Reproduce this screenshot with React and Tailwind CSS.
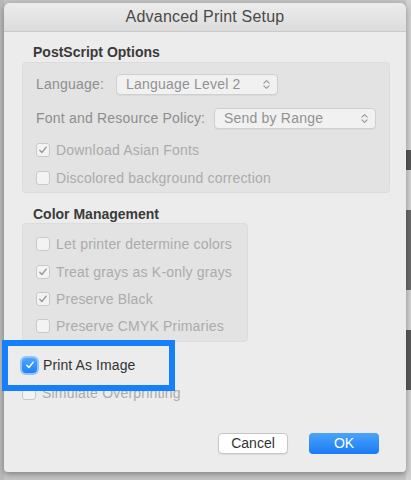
import React from 'react';

const font = { fontFamily: '"Liberation Sans", Arial, sans-serif' };

const Check = ({ checked, color = '#9a9a9a', size = 'w-[10px] h-[10px]' }) => (
  <svg viewBox="0 0 14 14" className={size}>
    {checked && (
      <path d="M2.5 7.5 L5.5 10.5 L11.5 3" fill="none" stroke={color} strokeWidth="2" strokeLinecap="round" strokeLinejoin="round" />
    )}
  </svg>
);

const DisabledCheckbox = ({ checked, label }) => (
  <div className="flex items-center h-[20px]">
    <div className="w-[14px] h-[14px] rounded-[3px] border border-[#c9c9c9] bg-[#f3f3f3] flex items-center justify-center">
      <Check checked={checked} />
    </div>
    <span className="ml-[6px] text-[14px] text-[#ababab] tracking-[0.2px]">{label}</span>
  </div>
);

const Chevrons = () => (
  <svg viewBox="0 0 8 12" className="w-[7px] h-[11px]">
    <path d="M1 4.5 L4 1.5 L7 4.5 M1 7.5 L4 10.5 L7 7.5" fill="none" stroke="#9a9a9a" strokeWidth="1.3" strokeLinecap="round" strokeLinejoin="round" />
  </svg>
);

const Popup = ({ value, width }) => (
  <div
    className="h-[21px] rounded-[4px] border border-[#cfcfcf] bg-[#f1f1f1] flex items-center justify-between pl-[9px] pr-[7px] shadow-[0_1px_0_rgba(0,0,0,0.04)]"
    style={{ width }}
  >
    <span className="text-[14px] text-[#929292] tracking-[0.2px]">{value}</span>
    <Chevrons />
  </div>
);

export default function App() {
  return (
    <div className="w-[411px] h-[480px] bg-[#c4c4c4] flex overflow-hidden" style={font}>
      <div className="w-[4px] shrink-0 bg-[#b9b9b9]" />
      <div className="w-[402px] shrink-0 flex flex-col pt-[3px]">
        <div className="relative h-[469px] bg-[#ececec] rounded-t-[6px] rounded-b-[4px] shadow-[0_2px_6px_rgba(0,0,0,0.35)] flex flex-col">
          {/* title bar */}
          <div className="h-[29px] shrink-0 rounded-t-[6px] bg-gradient-to-b from-[#ececec] to-[#dcdcdc] border-b border-[#c9c9c9] flex items-center justify-center">
            <span className="text-[16px] text-[#4a4a4a] tracking-[0.2px]">Advanced Print Setup</span>
          </div>

          {/* PostScript Options */}
          <div className="pl-[29px] mt-[12px] h-[17px] flex items-center">
            <span className="text-[14px] font-semibold text-[#3a3a3a]">PostScript Options</span>
          </div>
          <div className="ml-[18px] w-[368px] mt-[1px] bg-[#e3e3e3] border border-[#dcdcdc] rounded-[4px] pl-[13px] pt-[11px] pb-[4px]">
            <div className="flex items-center h-[21px]">
              <span className="w-[80px] text-[14px] text-[#8e8e8e] tracking-[0.2px]">Language:</span>
              <Popup value="Language Level 2" width={162} />
            </div>
            <div className="flex items-center h-[21px] mt-[13px]">
              <span className="w-[178px] text-[14px] text-[#8e8e8e] tracking-[0.2px]">Font and Resource Policy:</span>
              <Popup value="Send by Range" width={162} />
            </div>
            <div className="mt-[11px]">
              <DisabledCheckbox checked label="Download Asian Fonts" />
            </div>
            <div className="mt-[8px]">
              <DisabledCheckbox label="Discolored background correction" />
            </div>
          </div>

          {/* Color Management */}
          <div className="pl-[29px] mt-[13px] h-[17px] flex items-center">
            <span className="text-[14px] font-semibold text-[#3a3a3a]">Color Management</span>
          </div>
          <div className="ml-[18px] w-[226px] bg-[#e3e3e3] border border-[#dcdcdc] rounded-[4px] pl-[13px] pt-[10px] pb-[5px]">
            <DisabledCheckbox label="Let printer determine colors" />
            <div className="mt-[8px]">
              <DisabledCheckbox checked label="Treat grays as K-only grays" />
            </div>
            <div className="mt-[7px]">
              <DisabledCheckbox checked label="Preserve Black" />
            </div>
            <div className="mt-[7px]">
              <DisabledCheckbox label="Preserve CMYK Primaries" />
            </div>
          </div>

          {/* Print As Image */}
          <div className="ml-[18px] mt-[13px] flex items-center h-[20px]">
            <div className="w-[15px] h-[15px] rounded-[4px] bg-gradient-to-b from-[#4ea6fb] to-[#1f7ff5] ring-[2px] ring-[#8ec3fb] flex items-center justify-center">
              <Check checked color="#ffffff" />
            </div>
            <span className="ml-[6px] text-[14px] text-[#333333] tracking-[0.1px]">Print As Image</span>
          </div>
          <div className="ml-[18px] mt-[8px]">
            <DisabledCheckbox label="Simulate Overprinting" />
          </div>

          {/* buttons */}
          <div className="mt-auto mb-[18px] flex justify-end pr-[27px] gap-[21px]">
            <div className="w-[70px] h-[21px] rounded-[4px] bg-white border border-[#c6c6c6] shadow-[0_1px_1px_rgba(0,0,0,0.08)] flex items-center justify-center">
              <span className="text-[14px] text-[#333333]">Cancel</span>
            </div>
            <div className="w-[70px] h-[21px] rounded-[4px] bg-gradient-to-b from-[#4aa3fa] to-[#1a7af5] flex items-center justify-center">
              <span className="text-[14px] text-white">OK</span>
            </div>
          </div>

          {/* annotation highlight */}
          <div className="absolute left-[-2px] top-[337px] w-[173px] h-[51px] border-[6px] border-[#167ffb]" />
        </div>
      </div>
      <div className="w-[5px] shrink-0 flex flex-col bg-[#d2d2d2]">
        <div className="h-[150px]" />
        <div className="h-[20px] bg-[#555555]" />
        <div className="h-[40px]" />
        <div className="h-[80px] bg-[#6a6a6a]" />
        <div className="h-[40px]" />
        <div className="h-[60px] bg-[#5a5a5a]" />
      </div>
    </div>
  );
}
